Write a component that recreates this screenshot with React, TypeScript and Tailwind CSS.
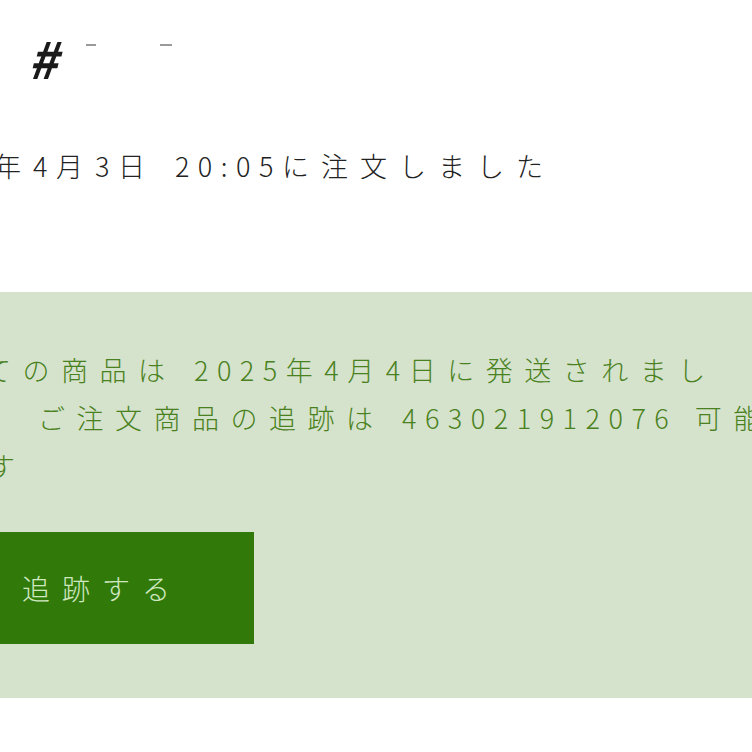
const jp = { fontFamily: '"Noto Sans CJK JP", "Noto Sans", sans-serif' };

function Num({ children }: { children: string }) {
    return <span className="tracking-[8.5px]">{children}</span>;
}

function OrderHeader() {
    return (
        <div className="h-[292px] bg-white">
            <div className="flex items-start pt-[32px] pl-[28px] h-[120px]">
                <span className="text-[50px] font-semibold text-[#1a1a1a] leading-none italic" style={jp}>#</span>
                <span className="mt-[12px] ml-[28px] w-[10px] h-[2px] bg-[#9a9a9a]" />
                <span className="mt-[12px] ml-[64px] w-[12px] h-[2px] bg-[#9a9a9a]" />
            </div>
            <div
                className="whitespace-nowrap -ml-[6px] mt-[22px] text-[27px] font-light tracking-[12px] text-[#222222] leading-[48px]"
                style={jp}
            >
                年<Num>4</Num>月<Num>3</Num>日 <Num>20:05</Num>に注文しました
            </div>
        </div>
    );
}

function ShippingNotice() {
    return (
        <div className="h-[406px] bg-[#d5e3cc] pt-[54px] overflow-hidden">
            <div className="text-[27px] font-light tracking-[11.5px] text-[#4a8120] leading-[48px]" style={jp}>
                <div className="whitespace-nowrap -ml-[16px]">
                    ての商品は <Num>2025</Num>年<Num>4</Num>月<Num>4</Num>日に発送されまし
                </div>
                <div className="whitespace-nowrap ml-[38px]">
                    ご注文商品の追跡は <Num>463021912076</Num> 可能で
                </div>
                <div className="whitespace-nowrap -ml-[12px]">す</div>
            </div>
            <button
                className="mt-[42px] w-[254px] h-[112px] bg-[#317a0a] text-left pl-[22px] text-[28px] font-light tracking-[12px] text-[#cfe8c0]"
                style={jp}
            >
                追跡する
            </button>
        </div>
    );
}

export default function App() {
    return (
        <div className="w-[752px] h-[752px] overflow-hidden bg-white">
            <OrderHeader />
            <ShippingNotice />
        </div>
    );
}
